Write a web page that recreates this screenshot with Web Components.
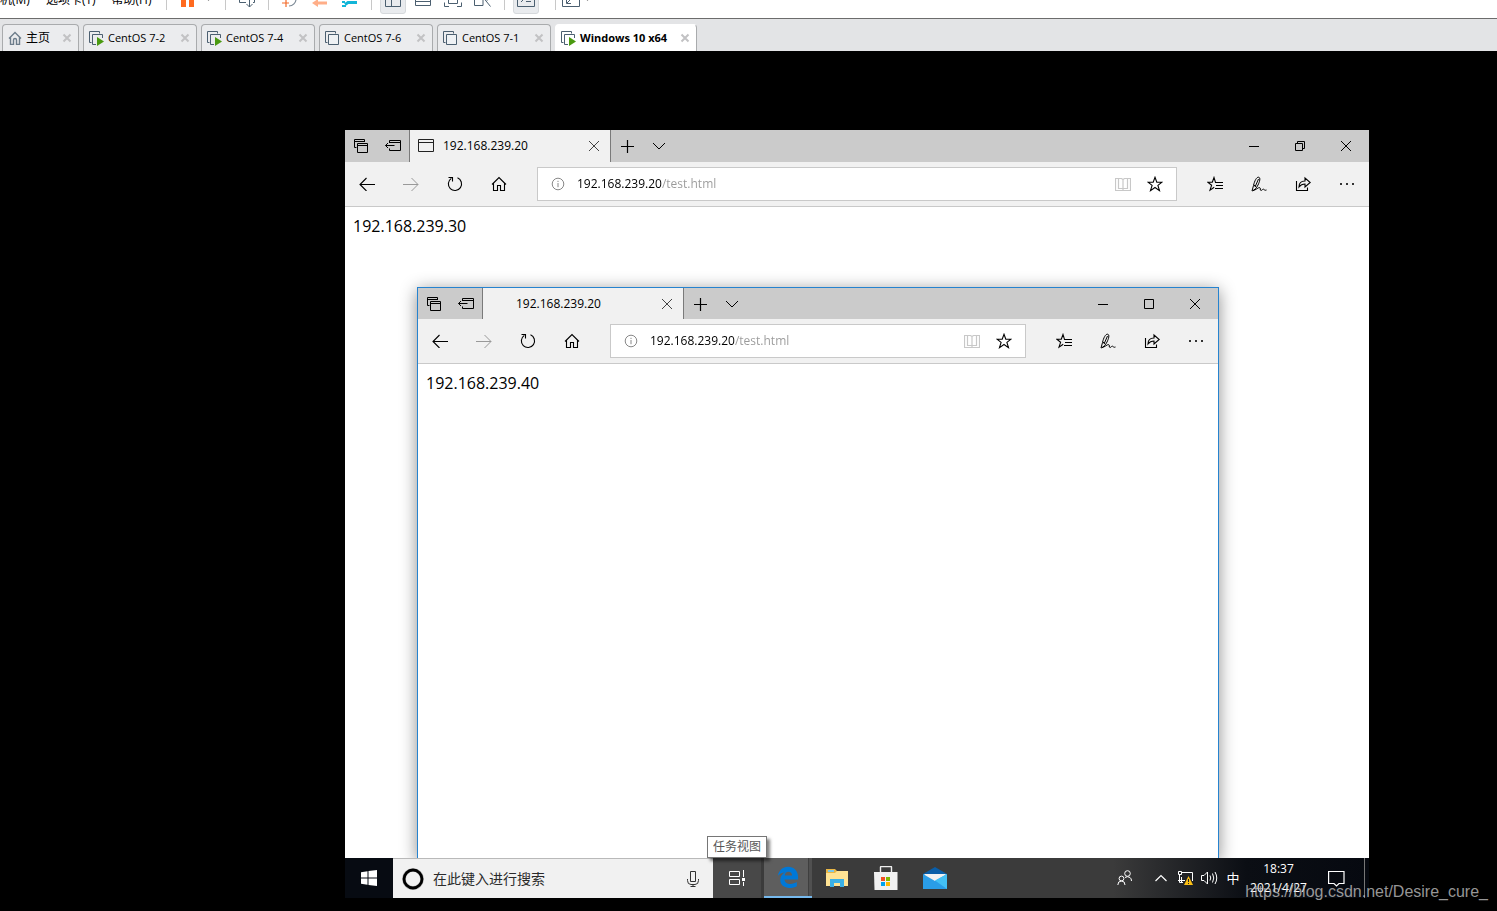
<!DOCTYPE html>
<html lang="zh-CN">
<head>
<meta charset="utf-8">
<title>Windows 10 x64</title>
<style>
html, body { margin: 0; height: 100%; background: #000; }
body { font-family: "Open Sans", "Noto Sans CJK SC", sans-serif; font-size: 12px; overflow: hidden; }
</style>
</head>
<body>
<vm-app></vm-app>
<script>
const define = (name, html, setup) => {
  const template = document.createElement('template');
  template.innerHTML = html;
  customElements.define(name, class extends HTMLElement {
    constructor() {
      super();
      this.attachShadow({ mode: 'open' }).append(template.content.cloneNode(true));
    }
    connectedCallback() { if (setup) setup(this, this.shadowRoot); }
  });
};

/* Each icon: [width, height, markup]; strokes take the current text colour. */
const ICONS = {
  house: [14, 14, '<path d="M1 7.5L7 1.5L13 7.5M2.5 6.5V13.5H5.5V9Q5.5 7.5 7 7.5Q8.5 7.5 8.5 9V13.5H11.5V6.5" stroke="#6d7d8b" stroke-width="1.4"/>'],
  vm: [15, 15, '<g stroke="#4b5f70"><path d="M2.5 11.5H.5V.5H10.5V2.5"/><path d="M3.5 3.5H13.5V13.5H3.5z" fill="#eef1f4"/></g>'],
  vmrun: [15, 15, '<g stroke="#4b5f70"><path d="M2.5 11.5H.5V.5H10.5V2.5"/><path d="M7 13.5H3.5V3.5H13.5V7"/></g><path d="M8 6L15 10.5L8 15z" fill="#4a9a10" stroke="none"/>'],
  tabx: [10, 10, '<path d="M1.5 1.5L8.5 8.5M8.5 1.5L1.5 8.5" stroke="#c2c2c4" stroke-width="2"/>'],
  pause: [16, 16, '<path d="M1 0H6V15H1zM9 0H14V15H9z" fill="#ff6a1f" stroke="none"/>'],
  drop: [5, 5, '<path d="M0 0H5L2.5 3z" fill="#777" stroke="none"/>'],
  send: [18, 16, '<g stroke="#4b5f70"><path d="M1.5 0V10.5H8M16.5 0V10.5H15M11.5 5V15M8.5 12L11.5 15L14.5 12"/></g>'],
  snap: [18, 16, '<path d="M8 0A7 7 0 1 1 8 14" stroke="#7d8a96" stroke-width="1.2"/><path d="M1 11H8M5 7V15" stroke="#f36b2a" stroke-width="1.2"/>'],
  revert: [18, 16, '<path d="M5 11H16" stroke="#ffae88" stroke-width="3"/><path d="M1 11L7 7V15z" fill="#ffae88" stroke="none"/>'],
  wrench: [18, 16, '<path d="M4 12.500L7 10.500H16" stroke="#12b5d8" stroke-width="3"/><path d="M1 14H5M1 10H4" stroke="#12b5d8" stroke-width="2"/>'],
  side: [16, 16, '<path d="M.5 .5H15.5V14.5H.5zM6.5 1V14M7 7.5H15" stroke="#4b5f70"/>'],
  rows: [16, 16, '<path d="M.5 .5H15.5V13.5H.5zM1 9.5H15" stroke="#4b5f70"/>'],
  full: [18, 16, '<path d="M.5 10.5V14.5H5M17.5 10.5V14.5H13M4.5 3.5H13.5V11.5H4.5z" stroke="#4b5f70"/>'],
  unity: [18, 16, '<path d="M.5 0V13.5H9M8 4L16.5 14.5M9 13.5V7L14 8M15.5 0V6" stroke="#4b5f70"/>'],
  term: [18, 16, '<path d="M.5 0V14.5H17.5V0M4 10L7 7M9 9.5H14" stroke="#4b5f70"/>'],
  grow: [18, 16, '<path d="M.5 0V14.5H17.5V0M4.5 7V11.5H9M5 11L14 2" stroke="#4b5f70"/>'],

  tabs: [16, 16, '<path d="M3.5 9.5H1.5V1.5H11.5V4M1.5 3.5H11M4.5 14.5V5.5H14.5V14.5zM4.5 7.5H14.5"/>'],
  aside: [16, 16, '<path d="M4.5 5V2.5H15.5V12.5H4.5V10.5M4.5 4.5H15.5M.5 7.5H9.5M3 5L.5 7.5L3 10"/>'],
  page: [16, 14, '<path d="M.5 .5H15.5V12.5H.5zM.5 3.5H15.5"/>'],
  close: [12, 12, '<path d="M1 1L11 11M11 1L1 11"/>'],
  plus: [14, 14, '<path d="M7.5 1V14M1 7.5H14" stroke-width="1.2"/>'],
  down: [14, 8, '<path d="M1 1L7 7L13 1"/>'],
  min: [10, 10, '<path d="M0 5.5H10"/>'],
  max: [10, 10, '<path d="M.5 .5H9.5V9.5H.5z"/>'],
  restore: [10, 10, '<path d="M.5 2.5H7.5V9.5H.5zM2.5 2V.5H9.5V7.5H8"/>'],
  back: [16, 14, '<path d="M16 7.5H1M7.5 1L1 7.5L7.5 14" stroke-width="1.1"/>'],
  fwd: [16, 14, '<path d="M0 7.5H15M8.5 1L15 7.5L8.5 14"/>'],
  reload: [16, 16, '<path d="M10.5 1.8A6.6 6.6 0 1 1 4.3 2.4M5.5 5.5V1.5H1.5" stroke-width="1.1"/>'],
  home: [16, 16, '<path d="M1 8.5L8 1.5L15 8.5M2.5 7.5V14.5H6.5V9.5H9.5V14.5H13.5V7.5" stroke-width="1.1"/>'],
  info: [14, 14, '<circle cx="7" cy="7" r="5.8"/><path d="M7 6V10.2M7 3.8V5"/>'],
  book: [16, 16, '<path d="M.5 2.5H6.5L8 3.5L9.5 2.5H15.5V14.5H.5zM8 3.5V14M3.5 2.5V12.500H12.5V2.5" stroke-width="1.2"/>'],
  star: [16, 16, '<path d="M8 1.3L9.8 6.2H15L10.9 9.4L12.5 14.6L8 11.5L3.5 14.6L5.1 9.4L1 6.2H6.2z" stroke-width="1.1"/>'],
  favs: [16, 16, '<path d="M8.5 6.3L7 1.5L5.3 6.3H.8L4.6 9.3L3 14.2L7.2 11.3M8 6.5H16M9 9.5H16M8 12.5H16" stroke-width="1.1"/>'],
  pen: [16, 16, '<path d="M1 15L2.500 9.500C3.500 5 5.500 1 7.500 1.200C10 1.500 8.500 6 7 9C5.500 12 3.500 14 1.500 14.800C5 14 7 11.500 8.500 11.500C10 11.500 8.500 14.500 10 14.500C11 14.500 11.500 13 12.500 13.200C13.500 13.500 13.500 14.800 15.500 14M2.800 9L5 10.500M7.500 3L4 11"/>'],
  share: [16, 16, '<path d="M1.5 5V14.5H12.5V11.5M4 11C4 7.5 6 5 10 5V2L15.2 6.5L10 11V8C7 8 5.5 9 4 11z" stroke-width="1.1"/>'],
  more: [16, 16, '<path d="M1 7H3V9H1zM7 7H9V9H7zM13 7H15V9H13z" fill="#333" stroke="none"/>'],

  start: [16, 16, '<path d="M0 2.2L6.5 1.3V7.5H0zM7.5 1.1L16 0V7.5H7.5zM0 8.5H6.5V14.7L0 13.8zM7.5 8.5H16V16L7.5 14.9z" fill="#fff" stroke="none"/>'],
  cortana: [22, 22, '<circle cx="11" cy="11" r="9" stroke-width="3.6" stroke="#555" opacity=".4"/><circle cx="11" cy="11" r="9" stroke-width="2.8" stroke="#000"/>'],
  mic: [12, 16, '<path d="M3.5 .5H8.5V10.5H3.5zM.5 8V9.5Q.5 13.5 4 13.5H8Q11.5 13.5 11.5 9.5V8M6 13.5V15.5M3.5 15.5H8.5"/>'],
  taskview: [16, 16, '<path d="M.5 1.5H10.5V6.5H.5zM.5 9.5H10.5V14.5H.5zM14.5 0V7M14.5 12V16"/><path d="M13 8H16V11H13z" fill="#fff" stroke="none"/>'],
  edge: [22, 22, '<svg width="22" height="22" viewBox="0 0 24 24"><path fill="#0078d7" stroke="none" fill-rule="evenodd" d="M1 10.6C2 5 6 .8 12 .8c6.3 0 11 4.5 11 11v2.8H8.2c.2 3.6 3.3 4.9 6.4 4.9 2.9 0 5-.8 7-2v4.5c-2.2 1.3-4.9 1.9-7.8 1.9-6.4 0-10.2-3.6-10.2-8.6 0-3.6 2-6.4 5-8.1-3.2.3-6 1.6-7.6 3.4zM8.4 10.4h8c0-2.4-1.4-4-3.9-4-2.3 0-3.9 1.6-4.1 4z"/></svg>'],
  explorer: [22, 20, '<g stroke="none"><path d="M0 1H9L11 3H21V18H0z" fill="#e9b645"/><path d="M2 2H8V4H2z" fill="#7ec8e8"/><path d="M0 5H9L11 3H22V18H0z" fill="#ffe394"/><path d="M4 19V11H18V19H14V15H8V19z" fill="#3bb0e5"/></g>'],
  store: [24, 24, '<path d="M6.5 8V1Q6.5 .5 7 .5H17Q17.500 .5 17.5 1V8" stroke="#eee" stroke-width="1.4"/><g stroke="none"><path d="M0 6H23.500V24H.5z" fill="#f1f1f1"/><path d="M7 11H11V15H7z" fill="#f25022"/><path d="M12 11H16V15H12z" fill="#7fba00"/><path d="M7 16H11V20H7z" fill="#00a4ef"/><path d="M12 16H16V20H12z" fill="#ffb900"/></g>'],
  mail: [24, 24, '<g stroke="none"><path d="M0 8L12 1L24 8V14H0z" fill="#0a5ea8"/><path d="M1 8H23L18 16H6z" fill="#f2f2f2"/><path d="M0 8L12 15L24 8V23H0z" fill="#2a9de8"/><path d="M2 8H22L12 14z" fill="#f2f2f2"/><path d="M12 14.500L24 8V23z" fill="#43c0f5"/></g>'],
  people: [16, 16, '<circle cx="10.500" cy="3.500" r="2.800"/><circle cx="4.500" cy="8.500" r="2.400"/><path d="M.8 15Q.8 11 4.500 11Q8 11 8 15M8 7.500Q10.500 5.800 13 7.500Q14.500 8.500 14.500 11"/>'],
  up: [12, 8, '<path d="M.5 7L6 1.500L11.500 7" stroke-width="1.200"/>'],
  net: [17, 16, '<path d="M4.500 2.500H15.500V11M1.500 1.500H4.500V4.500H1.500zM2.500 5V12.500H6M1 10.500H8M4.500 7V13"/><path d="M11.500 6L16 15H7z" fill="#fbbf14" stroke="none"/><path d="M11.500 9V12M11.500 13V14" stroke="#222"/>'],
  volume: [17, 16, '<path d="M.5 5.500H3L6.500 2V14L3 10.500H.5zM9 5.500Q10.500 8 9 10.500M11.500 3.500Q14 8 11.500 12.500M14 2Q17.500 8 14 14"/>'],
  action: [17, 17, '<path d="M.6 1.500H16V13.500H11L8.500 16L6 13.500H.6z" stroke-width="1.200"/>'],
};

define('ui-icon', `<style>:host{display:block;flex:none;line-height:0}svg{display:block}</style>`, (el, root) => {
  const [w, h, body] = ICONS[el.getAttribute('name')];
  root.innerHTML += `<svg width="${w}" height="${h}" viewBox="0 0 ${w} ${h}" fill="none" stroke="currentColor" aria-hidden="true">${body}</svg>`;
});

const BUTTON = `button{all:unset;box-sizing:border-box;display:flex;align-items:center;justify-content:center;flex:none}`;

define('vm-toolbar', `
<style>
${BUTTON}
:host{display:flex;align-items:flex-end;height:18px;overflow:hidden;background:#fff;border-bottom:1px solid #6c6c6c}
nav{display:flex;align-items:center;height:28px;margin-bottom:4px;flex:none}
a{color:#000;text-decoration:none;font-size:12px;line-height:16px;white-space:nowrap;margin-right:16px}
.last{margin-right:8px}
hr{width:1px;height:20px;border:0;margin:0 6px;background:#c8c8c8}
button{width:30px;height:28px}
.drop{width:16px;justify-content:flex-start;padding-left:3px}
.on{background:#e9ebee;border:1px solid #d6d9dc;border-radius:3px;width:26px;margin:0 2px}
.term{margin-right:10px}
.narrow{width:20px;justify-content:flex-start}
</style>
<nav>
<a href="#">机(M)</a><a href="#">选项卡(T)</a><a class="last" href="#">帮助(H)</a>
<hr><button aria-label="暂停"><ui-icon name="pause"></ui-icon></button><button class="drop" aria-label="电源"><ui-icon name="drop"></ui-icon></button>
<hr><button aria-label="发送"><ui-icon name="send"></ui-icon></button>
<hr><button aria-label="快照"><ui-icon name="snap"></ui-icon></button><button aria-label="恢复"><ui-icon name="revert"></ui-icon></button><button aria-label="管理"><ui-icon name="wrench"></ui-icon></button>
<hr><button class="on" aria-label="库"><ui-icon name="side"></ui-icon></button><button aria-label="缩略图"><ui-icon name="rows"></ui-icon></button><button aria-label="全屏"><ui-icon name="full"></ui-icon></button><button aria-label="Unity"><ui-icon name="unity"></ui-icon></button>
<hr><button class="on term" aria-label="控制台"><ui-icon name="term"></ui-icon></button>
<hr><button class="narrow" aria-label="拉伸"><ui-icon name="grow"></ui-icon></button><button class="drop" aria-label="选项"><ui-icon name="drop"></ui-icon></button>
</nav>`);

define('vm-tab', `
<style>
${BUTTON}
:host{display:flex;align-items:center;box-sizing:border-box;width:114px;height:27px;padding:0 6px 0 5px;border:1px solid #a9abad;border-bottom:0;border-radius:4px 4px 0 0;background:#ebecee;color:#000;font-size:11px;line-height:16px;white-space:nowrap}
:host([home]){width:77px;font-size:12px}
:host([active]){width:142px;background:#fff;font-weight:700;border-color:#fff #a9abad #fff #fff}
.label{flex:1;justify-content:flex-start;gap:4px}
</style>
<button class="label"><slot name="icon"></slot><span><slot></slot></span></button>
<button aria-label="关闭"><ui-icon name="tabx"></ui-icon></button>`);

define('vm-tabs', `
<style>
:host{display:flex;align-items:flex-end;gap:4px;height:32px;padding-left:2px;background:#e3e4e6}
</style>
<slot></slot>`);

define('edge-window', `
<style>
${BUTTON}
:host{display:flex;flex-direction:column;background:#fff;color:#000;box-sizing:border-box}
.title{display:flex;height:var(--title-height,32px);background:#cbcbcb;flex:none}
.group{display:flex;width:64px;border-right:1px solid #7a7a7a}
.group button,.new{width:32px}
.tab{display:flex;align-items:center;box-sizing:border-box;width:201px;border-right:1px solid #7a7a7a;background:#f1f1f1;padding:0 10px 0 8px;font-size:12px;line-height:16px}
.favicon{width:25px;height:14px;color:#222}
.tab .name{flex:1;justify-content:flex-start}
.tab ui-icon{color:#444}
.caption{display:flex;margin-left:auto}
.caption button{width:46px}
.bar{display:flex;align-items:center;height:44px;background:#f1f1f1;border-bottom:1px solid #c9c9c9;flex:none}
.bar>button{width:44px;height:44px}
.bar>.off{color:#999}
form{display:flex;align-items:center;flex:1;min-width:0;height:34px;box-sizing:border-box;margin:0 16px;padding:0 5px 0 13px;border:1px solid #c9c9c9;background:#fff}
form button{width:32px;height:32px}
.info{color:#888}
form .book{color:#c8c8c8}
input{flex:1;min-width:0;height:20px;margin:0 0 0 12px;padding:0;border:0;outline:0;font:12px/20px "Open Sans",sans-serif;color:#000;background:linear-gradient(90deg,#000 85px,#999 85px);-webkit-background-clip:text;background-clip:text;-webkit-text-fill-color:transparent}
main{flex:1;padding:8px;font-size:16px;line-height:22px}
</style>
<div class="title">
<div class="group"><button aria-label="标签页"><ui-icon name="tabs"></ui-icon></button><button aria-label="搁置"><ui-icon name="aside"></ui-icon></button></div>
<div class="tab"><span class="favicon"><slot name="favicon"></slot></span><button class="name">192.168.239.20</button><button aria-label="关闭标签页"><ui-icon name="close"></ui-icon></button></div>
<button class="new" aria-label="新建标签页"><ui-icon name="plus"></ui-icon></button><button class="new" aria-label="预览"><ui-icon name="down"></ui-icon></button>
<div class="caption"><button aria-label="最小化"><ui-icon name="min"></ui-icon></button><button aria-label="最大化"><slot name="size"></slot></button><button aria-label="关闭"><ui-icon name="close"></ui-icon></button></div>
</div>
<div class="bar">
<button aria-label="后退"><ui-icon name="back"></ui-icon></button><button class="off" aria-label="前进"><ui-icon name="fwd"></ui-icon></button><button aria-label="刷新"><ui-icon name="reload"></ui-icon></button><button aria-label="主页"><ui-icon name="home"></ui-icon></button>
<form><ui-icon class="info" name="info"></ui-icon><input aria-label="地址" value="192.168.239.20/test.html"><button type="button" class="book" aria-label="阅读视图"><ui-icon name="book"></ui-icon></button><button type="button" aria-label="收藏"><ui-icon name="star"></ui-icon></button></form>
<button aria-label="收藏夹"><ui-icon name="favs"></ui-icon></button><button aria-label="笔记"><ui-icon name="pen"></ui-icon></button><button aria-label="共享"><ui-icon name="share"></ui-icon></button><button aria-label="更多"><ui-icon name="more"></ui-icon></button>
</div>
<main><slot></slot></main>`);

define('task-bar', `
<style>
${BUTTON}
:host{display:flex;height:40px;flex:none;color:#fff;background:linear-gradient(90deg,#3b3b3b 0,#3b3b3b 75%,#0b0e14 88%,#060910 100%)}
.start{width:48px;background:#070b12}
label{display:flex;align-items:center;box-sizing:border-box;width:320px;padding:0 14px 0 9px;border-top:1px solid #b9b9b9;background:#f1f1f1;color:#333}
input{flex:1;min-width:0;border:0;outline:0;margin:0 0 0 9px;padding:0;background:none;font:14px/20px "Open Sans","Noto Sans CJK SC",sans-serif;color:#2b2b2b}
input::placeholder{color:#2b2b2b;opacity:1}
.apps{display:flex;gap:1px}
.apps button{width:48px}
.apps .view{background:#484848;margin-right:2px}
.apps .edge{background:linear-gradient(90deg,#5e5e5e 44px,#3f3f3f 44px,#3f3f3f 45px,#505050 45px);border-bottom:2px solid #76b9ed}
.tray{display:flex;margin-left:auto}
.tray button{width:24px}
.tray .wide{width:48px}
.tray .clock{width:67px;text-align:center;font-size:12px;line-height:19px}
.tray .ime{font-size:13px;line-height:16px}
.desk{width:4px;margin-left:4px;border-left:1px solid #777}
</style>
<button class="start" aria-label="开始"><ui-icon name="start"></ui-icon></button>
<label><ui-icon name="cortana"></ui-icon><input aria-label="搜索" placeholder="在此键入进行搜索"><ui-icon name="mic"></ui-icon></label>
<div class="apps"><button class="view" aria-label="任务视图"><ui-icon name="taskview"></ui-icon></button><button class="edge" aria-label="Microsoft Edge"><ui-icon name="edge"></ui-icon></button><button aria-label="文件资源管理器"><ui-icon name="explorer"></ui-icon></button><button aria-label="应用商店"><ui-icon name="store"></ui-icon></button><button aria-label="邮件"><ui-icon name="mail"></ui-icon></button></div>
<div class="tray"><button class="wide" aria-label="人脉"><ui-icon name="people"></ui-icon></button><button aria-label="隐藏的图标"><ui-icon name="up"></ui-icon></button><button aria-label="网络"><ui-icon name="net"></ui-icon></button><button aria-label="音量"><ui-icon name="volume"></ui-icon></button><button class="ime">中</button><button class="clock">18:37<br>2021/4/27</button><button class="wide" aria-label="操作中心"><ui-icon name="action"></ui-icon></button><div class="desk"></div></div>`);

define('guest-screen', `
<style>
:host{display:flex;flex-direction:column;flex:1;min-width:0;position:relative}
.desktop{display:flex;flex:1;position:relative;overflow:hidden}
.back{flex:1}
.front{position:absolute;left:72px;top:157px;right:150px;bottom:-1px;border:1px solid #2683cf;box-shadow:0 3px 16px rgba(0,0,0,.45);--title-height:31px}
.tip{position:absolute;left:362px;bottom:40px;box-sizing:border-box;height:22px;padding:0 5px;border:1px solid #767676;background:#fff;color:#575757;font-size:12px;line-height:20px;white-space:nowrap;box-shadow:3px 3px 3px rgba(0,0,0,.5)}
</style>
<div class="desktop">
<edge-window class="back"><ui-icon slot="favicon" name="page"></ui-icon><ui-icon slot="size" name="restore"></ui-icon>192.168.239.30</edge-window>
<edge-window class="front"><ui-icon slot="size" name="max"></ui-icon>192.168.239.40</edge-window>
</div>
<task-bar></task-bar>
<div class="tip" role="tooltip">任务视图</div>`);

define('vm-app', `
<style>
:host{display:flex;flex-direction:column;height:100vh;position:relative;background:#000}
.stage{display:flex;flex:1;padding:79px 128px 13px 345px}
.mark{position:absolute;right:9px;bottom:9px;font:16px/20px "Liberation Sans",sans-serif;color:rgba(200,200,200,.75);white-space:nowrap}
</style>
<vm-toolbar></vm-toolbar>
<vm-tabs>
<vm-tab home><ui-icon slot="icon" name="house"></ui-icon>主页</vm-tab>
<vm-tab><ui-icon slot="icon" name="vmrun"></ui-icon>CentOS 7-2</vm-tab>
<vm-tab><ui-icon slot="icon" name="vmrun"></ui-icon>CentOS 7-4</vm-tab>
<vm-tab><ui-icon slot="icon" name="vm"></ui-icon>CentOS 7-6</vm-tab>
<vm-tab><ui-icon slot="icon" name="vm"></ui-icon>CentOS 7-1</vm-tab>
<vm-tab active><ui-icon slot="icon" name="vmrun"></ui-icon>Windows 10 x64</vm-tab>
</vm-tabs>
<div class="stage"><guest-screen></guest-screen></div>
<div class="mark">https://blog.csdn.net/Desire_cure_</div>`);
</script>
</body>
</html>
